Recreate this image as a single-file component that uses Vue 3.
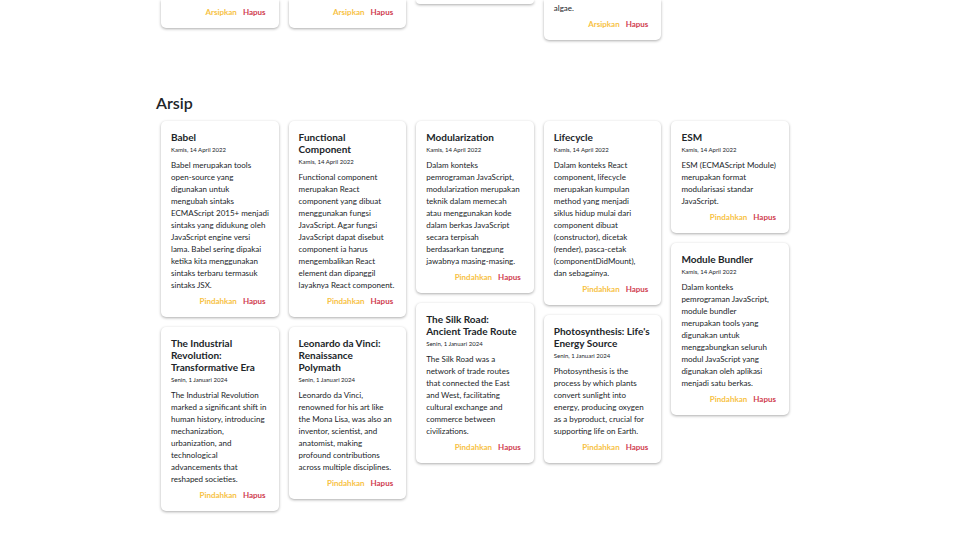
<script setup>
const date2022 = 'Kamis, 14 April 2022'
const date2024 = 'Senin, 1 Januari 2024'

const activeColumns = [
  { id: 1, tail: '', actions: true },
  { id: 2, tail: '', actions: true },
  { id: 3, tail: '', actions: false },
  { id: 4, tail: 'algae.', actions: true },
]

const archivedColumns = [
  [
    {
      title: 'Babel',
      date: date2022,
      body: 'Babel merupakan tools\nopen-source yang\ndigunakan untuk\nmengubah sintaks\nECMAScript 2015+ menjadi\nsintaks yang didukung oleh\nJavaScript engine versi\nlama. Babel sering dipakai\nketika kita menggunakan\nsintaks terbaru termasuk\nsintaks JSX.',
    },
    {
      title: 'The Industrial\nRevolution:\nTransformative Era',
      date: date2024,
      body: 'The Industrial Revolution\nmarked a significant shift in\nhuman history, introducing\nmechanization,\nurbanization, and\ntechnological\nadvancements that\nreshaped societies.',
    },
  ],
  [
    {
      title: 'Functional\nComponent',
      date: date2022,
      body: 'Functional component\nmerupakan React\ncomponent yang dibuat\nmenggunakan fungsi\nJavaScript. Agar fungsi\nJavaScript dapat disebut\ncomponent ia harus\nmengembalikan React\nelement dan dipanggil\nlayaknya React component.',
    },
    {
      title: 'Leonardo da Vinci:\nRenaissance\nPolymath',
      date: date2024,
      body: 'Leonardo da Vinci,\nrenowned for his art like\nthe Mona Lisa, was also an\ninventor, scientist, and\nanatomist, making\nprofound contributions\nacross multiple disciplines.',
    },
  ],
  [
    {
      title: 'Modularization',
      date: date2022,
      body: 'Dalam konteks\npemrograman JavaScript,\nmodularization merupakan\nteknik dalam memecah\natau menggunakan kode\ndalam berkas JavaScript\nsecara terpisah\nberdasarkan tanggung\njawabnya masing-masing.',
    },
    {
      title: 'The Silk Road:\nAncient Trade Route',
      date: date2024,
      body: 'The Silk Road was a\nnetwork of trade routes\nthat connected the East\nand West, facilitating\ncultural exchange and\ncommerce between\ncivilizations.',
    },
  ],
  [
    {
      title: 'Lifecycle',
      date: date2022,
      body: 'Dalam konteks React\ncomponent, lifecycle\nmerupakan kumpulan\nmethod yang menjadi\nsiklus hidup mulai dari\ncomponent dibuat\n(constructor), dicetak\n(render), pasca-cetak\n(componentDidMount),\ndan sebagainya.',
    },
    {
      title: "Photosynthesis: Life's\nEnergy Source",
      date: date2024,
      body: 'Photosynthesis is the\nprocess by which plants\nconvert sunlight into\nenergy, producing oxygen\nas a byproduct, crucial for\nsupporting life on Earth.',
    },
  ],
  [
    {
      title: 'ESM',
      date: date2022,
      body: 'ESM (ECMAScript Module)\nmerupakan format\nmodularisasi standar\nJavaScript.',
    },
    {
      title: 'Module Bundler',
      date: date2022,
      body: 'Dalam konteks\npemrograman JavaScript,\nmodule bundler\nmerupakan tools yang\ndigunakan untuk\nmenggabungkan seluruh\nmodul JavaScript yang\ndigunakan oleh aplikasi\nmenjadi satu berkas.',
    },
  ],
]
</script>

<template>
  <main class="page">
    <section class="columns">
      <div v-for="column in activeColumns" :key="column.id" class="column">
        <article class="card continued">
          <p v-if="column.tail" class="body">{{ column.tail }}</p>
          <div v-if="column.actions" class="actions">
            <button type="button" class="move">Arsipkan</button>
            <button type="button" class="delete">Hapus</button>
          </div>
        </article>
      </div>
    </section>

    <section class="archive">
      <h2 class="heading">Arsip</h2>
      <div class="columns">
        <div v-for="(column, index) in archivedColumns" :key="index" class="column">
          <article v-for="note in column" :key="note.title" class="card">
            <h3 class="title">{{ note.title }}</h3>
            <p class="date">{{ note.date }}</p>
            <p class="body">{{ note.body }}</p>
            <div class="actions">
              <button type="button" class="move">Pindahkan</button>
              <button type="button" class="delete">Hapus</button>
            </div>
          </article>
        </div>
      </div>
    </section>
  </main>
</template>

<style>
body {
  background: #fff;
}
</style>

<style scoped>
.page {
  box-sizing: border-box;
  max-width: 648px;
  margin: 0 auto;
  padding: 0 10px 28px 0;
  color: #212529;
  font-family: Lato, "Open Sans", sans-serif;
}

.columns {
  display: grid;
  grid-template-columns: repeat(5, minmax(0, 1fr));
  gap: 10px;
  padding: 0 5px;
  align-items: start;
}

.column {
  display: grid;
  grid-template-columns: minmax(0, 1fr);
  gap: 10px;
}

.card {
  padding: 10px;
  border-radius: 5px;
  background: #fff;
  box-shadow: 0 1px 3px rgba(0, 0, 0, 0.33);
}

.card.continued {
  padding-top: 2px;
  border-radius: 0 0 5px 5px;
}

.card.continued:not(:has(.actions)) {
  padding-bottom: 2px;
}

.archive {
  margin-top: 52px;
}

.heading {
  margin: 0 0 7px;
  font-size: 16px;
  font-weight: 600;
  line-height: 22px;
}

.title,
.date,
.body {
  margin: 0;
  white-space: pre;
}

.title {
  font-size: 10px;
  font-weight: 700;
  line-height: 12px;
}

.date {
  margin: 3px 0 5px;
  font-size: 6px;
  line-height: 8px;
}

.body {
  font-size: 8px;
  line-height: 12px;
}

.actions {
  display: flex;
  justify-content: flex-end;
  gap: 6px;
  margin-top: 4px;
  padding-right: 3px;
}

button {
  padding: 0;
  border: 0;
  background: none;
  font-family: inherit;
  font-size: 8px;
  font-weight: 700;
  line-height: 12px;
  cursor: pointer;
}

.move {
  color: #f7c244;
}

.delete {
  color: #d04050;
}
</style>
